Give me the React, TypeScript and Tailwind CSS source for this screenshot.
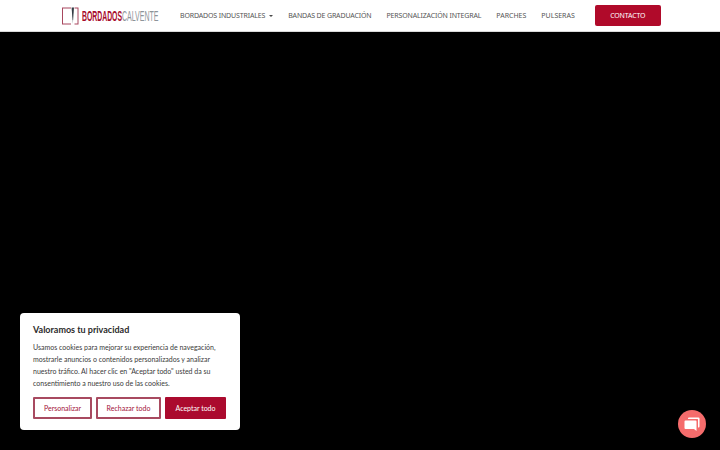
const navLinks = ["BANDAS DE GRADUACIÓN", "PERSONALIZACIÓN INTEGRAL"]

function Logo() {
    return (
        <div className="flex items-center w-[97px] shrink-0">
            <svg width="18" height="18" viewBox="0 0 18 18" className="shrink-0">
                <rect x="0.5" y="1" width="15.5" height="16" fill="none" stroke="#a8475e" strokeWidth="1" />
                <rect x="9" y="0" width="3.5" height="18" fill="#ffffff" />
                <path d="M9.6 0.5 L12 0.5 L11.1 13 L10.5 13 Z" fill="#333c44" />
                <path d="M10.5 13 L11.1 13 L10.8 17 Z" fill="#8a9297" />
            </svg>
            <div className="ml-[2px] flex items-center h-[14px] leading-[14px] text-[14px] whitespace-nowrap">
                <span className="inline-block w-[40px] font-bold text-[#a80c2c] origin-left scale-x-[0.49]">BORDADOS</span>
                <span className="inline-block w-[37px] font-normal text-[#8d9499] origin-left scale-x-[0.5]">CALVENTE</span>
            </div>
        </div>
    )
}

export default function App() {
    return (
        <div className="relative w-[720px] h-[450px] overflow-hidden bg-black font-['Liberation_Sans',sans-serif]">
            <header className="h-[32px] bg-white border-b border-[#d9d9d9] flex items-center pl-[62px]">
                <Logo />
                <nav className="ml-[21px] pt-[1px] flex items-center gap-[15px] font-['Noto_Sans',sans-serif] text-[7px] tracking-[-0.15px] text-[#555555] whitespace-nowrap">
                    <span className="flex items-center gap-[4px]">
                        BORDADOS INDUSTRIALES
                        <span className="w-0 h-0 border-x-[2px] border-x-transparent border-t-[2px] border-t-[#4a4a4a]" />
                    </span>
                    {navLinks.map((link) => (
                        <span key={link}>{link}</span>
                    ))}
                    <span className="tracking-normal">PARCHES</span>
                    <span className="tracking-normal">PULSERAS</span>
                </nav>
                <button className="ml-[20px] w-[66px] h-[21px] pt-[1px] rounded-[2px] bg-[#b00a2a] text-white font-['Noto_Sans',sans-serif] text-[7px] tracking-[-0.15px]">
                    CONTACTO
                </button>
            </header>

            <div className="absolute left-[20px] top-[313px] w-[220px] h-[117px] bg-white rounded-[4px] px-[13px] pt-[10px] font-['Lato',sans-serif]">
                <h2 className="text-[9px] leading-[13px] font-bold text-[#2b2b2b]">Valoramos tu privacidad</h2>
                <p className="mt-[5px] text-[7px] leading-[12px] text-[#3a3a3a] whitespace-nowrap">
                    Usamos cookies para mejorar su experiencia de navegación,
                    <br />
                    mostrarle anuncios o contenidos personalizados y analizar
                    <br />
                    nuestro tráfico. Al hacer clic en "Aceptar todo" usted da su
                    <br />
                    consentimiento a nuestro uso de las cookies.
                </p>
                <div className="mt-[8px] flex gap-[4px]">
                    <button className="w-[59px] h-[22px] rounded-[1px] border-2 border-[#a84a60] bg-white text-[7px] text-[#a3143a]">
                        Personalizar
                    </button>
                    <button className="w-[65px] h-[22px] rounded-[1px] border-2 border-[#a84a60] bg-white text-[7px] text-[#a3143a]">
                        Rechazar todo
                    </button>
                    <button className="w-[61px] h-[22px] rounded-[1px] bg-[#ab0a2e] text-[7px] text-white">
                        Aceptar todo
                    </button>
                </div>
            </div>

            <div className="absolute left-[678px] top-[410px] w-[28px] h-[28px] rounded-full bg-[#f56c6c] flex items-center justify-center">
                <svg width="16" height="16" viewBox="0 0 16 16">
                    <path d="M5 1.5 H14.5 a1 1 0 0 1 1 1 V10.5 a1 1 0 0 1 -1 1 H14 V3.5 a0.5 0.5 0 0 0 -0.5 -0.5 H4 V2.5 a1 1 0 0 1 1 -1 Z" fill="#ffffff" />
                    <path d="M1.5 4.5 H11.5 a1 1 0 0 1 1 1 V15 L10 13 H1.5 a1 1 0 0 1 -1 -1 V5.5 a1 1 0 0 1 1 -1 Z" fill="#ffffff" />
                </svg>
            </div>
        </div>
    )
}
